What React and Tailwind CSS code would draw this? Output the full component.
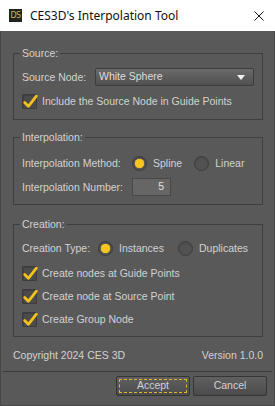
import { useState } from "react";

const label = "text-[10.5px] leading-[14px] text-[#d2d2d2]";

function Check({ checked, onChange, children }) {
  return (
    <label className="flex items-center gap-[5px] h-[16px] cursor-default" onClick={onChange}>
      <span className="relative w-[15px] h-[15px] shrink-0 rounded-[1px] border border-[#3c3c3c] bg-[#4b4b4b] shadow-[inset_1px_1px_0_#404040]">
        {checked && (
          <svg viewBox="0 0 16 16" className="absolute -left-[1px] -top-[2px] w-[17px] h-[17px]">
            <path d="M2.5 9 L6 12.5 L13.5 3" fill="none" stroke="#f4c21e" strokeWidth="2.6" strokeLinecap="round" strokeLinejoin="round" />
          </svg>
        )}
      </span>
      <span className={label}>{children}</span>
    </label>
  );
}

function Radio({ on, onClick, children }) {
  return (
    <div className="flex items-center gap-[6px] h-[18px] cursor-default" onClick={onClick}>
      <span className="w-[15px] h-[15px] shrink-0 rounded-full border border-[#3e3e3e] bg-[#525252] flex items-center justify-center shadow-[inset_0_1px_1px_#454545]">
        {on && <span className="w-[9px] h-[9px] rounded-full bg-[#f6c51f] shadow-[0_0_1px_#ffd84a]" />}
      </span>
      <span className={label}>{children}</span>
    </div>
  );
}

function Group({ title, className, children }) {
  return (
    <fieldset className={`border border-[#3f3f3f] px-[8px] ${className}`}>
      <legend className={`${label} -ml-[2px] px-[2px]`}>{title}</legend>
      {children}
    </fieldset>
  );
}

export default function App() {
  const [includeSrc, setIncludeSrc] = useState(true);
  const [method, setMethod] = useState("spline");
  const [type, setType] = useState("instances");
  const [atGuides, setAtGuides] = useState(true);
  const [atSource, setAtSource] = useState(true);
  const [group, setGroup] = useState(true);

  return (
    <div className="w-[275px] h-[406px] flex flex-col bg-[#595959] border-x border-b border-[#474747] font-['Liberation_Sans',Arial,sans-serif] select-none">

      {/* ── Title bar ── */}
      <div className="h-[31px] shrink-0 bg-white flex items-center pl-[9px] pr-[11px] -mx-px">
        <div className="w-[13px] h-[13px] bg-[#23231d] flex items-center justify-center">
          <span className="text-[8px] leading-none text-[#c9b356] tracking-[-0.5px] font-['DejaVu_Sans',sans-serif]">DS</span>
        </div>
        <span className="ml-[8px] text-[12px] text-[#111] font-['Noto_Sans',sans-serif]">CES3D's Interpolation Tool</span>
        <svg viewBox="0 0 10 10" className="ml-auto w-[10px] h-[10px]">
          <path d="M0.5 0.5 L9.5 9.5 M9.5 0.5 L0.5 9.5" stroke="#111" strokeWidth="1" />
        </svg>
      </div>

      {/* ── Body ── */}
      <div className="flex flex-col pl-[12px] pr-[11px] pt-[15px]">
        <Group title="Source:" className="pb-[10px]">
          <div className="flex items-center mt-[8px]">
            <span className={`${label} w-[73px]`}>Source Node:</span>
            <div className="flex-1 h-[18px] flex items-center pl-[3px] pr-[8px] rounded-[2px] border border-[#3d3d3d] bg-gradient-to-b from-[#6a6a6a] to-[#505050]">
              <span className="text-[10.5px] text-[#dedede]">White Sphere</span>
              <svg viewBox="0 0 8 5" className="ml-auto w-[8px] h-[5px]">
                <path d="M0 0 H8 L4 5 Z" fill="#f2f2f2" />
              </svg>
            </div>
          </div>
          <div className="mt-[7px]">
            <Check checked={includeSrc} onChange={() => setIncludeSrc(!includeSrc)}>Include the Source Node in Guide Points</Check>
          </div>
        </Group>

        <Group title="Interpolation:" className="mt-[10px] pb-[8px]">
          <div className="flex items-center mt-[10px]">
            <span className={`${label} w-[110px]`}>Interpolation Method:</span>
            <Radio on={method === "spline"} onClick={() => setMethod("spline")}>Spline</Radio>
            <div className="ml-[12px]">
              <Radio on={method === "linear"} onClick={() => setMethod("linear")}>Linear</Radio>
            </div>
          </div>
          <div className="flex items-center mt-[6px]">
            <span className={`${label} w-[110px]`}>Interpolation Number:</span>
            <div className="w-[39px] h-[18px] border border-[#484848] bg-[#666666] flex items-center justify-end pr-[6px]">
              <span className="text-[10.5px] text-[#e2e2e2]">5</span>
            </div>
          </div>
        </Group>

        <Group title="Creation:" className="mt-[12px] pb-[9px]">
          <div className="flex items-center mt-[8px]">
            <span className={`${label} w-[76px]`}>Creation Type:</span>
            <Radio on={type === "instances"} onClick={() => setType("instances")}>Instances</Radio>
            <div className="ml-[14px]">
              <Radio on={type === "duplicates"} onClick={() => setType("duplicates")}>Duplicates</Radio>
            </div>
          </div>
          <div className="flex flex-col gap-[7px] mt-[8px]">
            <Check checked={atGuides} onChange={() => setAtGuides(!atGuides)}>Create nodes at Guide Points</Check>
            <Check checked={atSource} onChange={() => setAtSource(!atSource)}>Create node at Source Point</Check>
            <Check checked={group} onChange={() => setGroup(!group)}>Create Group Node</Check>
          </div>
        </Group>

        <div className="flex items-center justify-between mt-[11px]">
          <span className={label}>Copyright 2024 CES 3D</span>
          <span className={label}>Version 1.0.0</span>
        </div>
      </div>

      {/* ── Footer ── */}
      <div className="mt-[9px] mx-[2px] h-px bg-[#3a3a3a]" />
      <div className="flex justify-end gap-[3px] pr-[7px] pt-[4px]">
        <button className="w-[74px] h-[20px] p-[2px] rounded-[2px] border border-[#353535] bg-gradient-to-b from-[#606060] to-[#4b4b4b]">
          <span className="w-full h-full flex items-center justify-center border border-dashed border-[#e1b732] text-[10.5px] text-[#d2d2d2]">Accept</span>
        </button>
        <button className="w-[74px] h-[20px] rounded-[2px] border border-[#353535] bg-gradient-to-b from-[#606060] to-[#4b4b4b] text-[10.5px] text-[#d2d2d2]">Cancel</button>
      </div>
    </div>
  );
}
